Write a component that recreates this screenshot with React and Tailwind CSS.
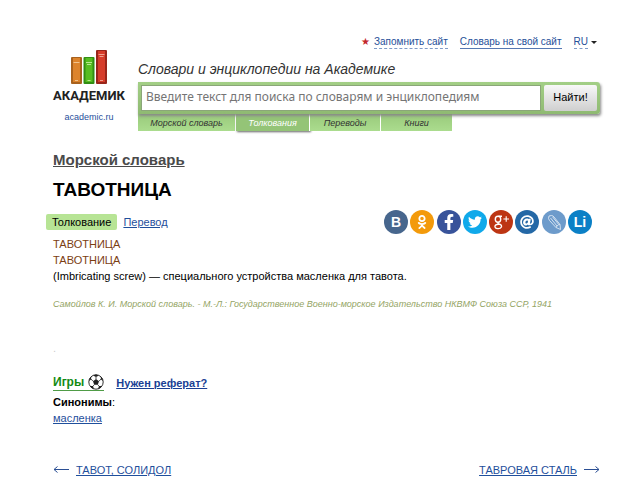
import React, { useState } from 'react';
import { FaOdnoklassniki, FaFacebookF, FaTwitter, FaAt } from 'react-icons/fa';

const TABS = [
  { value: 'marine', label: 'Морской словарь', width: 'w-[98px]' },
  { value: 'meanings', label: 'Толкования', width: 'w-[74px]' },
  { value: 'translations', label: 'Переводы', width: 'w-[71px]' },
  { value: 'books', label: 'Книги', width: 'w-[72px]' },
];

const PencilIcon = () => (
  <svg viewBox="0 0 24 24" className="size-6" fill="none" stroke="#dce8f4" strokeWidth=".9" strokeLinejoin="round">
    <path d="M6.5 8.5 Q6 5 9.5 5.5 Q11 5.5 12 7 L18 14.5 L18.5 19.5 L14 17.5 L7.5 10.5 Z" />
    <path d="M8.5 8 L15 16 M10.5 6.8 L16.8 14.6 M14 17.5 L15 16 L16.8 14.6 L18 14.5" />
  </svg>
);

const GooglePlusIcon = () => (
  <svg viewBox="0 0 24 24" className="size-6" fill="none" stroke="#fff" strokeWidth="1.4">
    <ellipse cx="9" cy="9.2" rx="2.7" ry="3" />
    <path d="M13 6.2 H9.5 M9.5 12.2 Q8 13.5 10.5 14.2 Q13 15 12.4 17 Q11.5 18.8 8.7 18.6 Q5.5 18.2 6 16 Q6.8 14 10.5 14.2" />
    <path strokeWidth="1.1" d="M17.2 6.2 V11.8 M14.4 9 H20" />
  </svg>
);

const SHARES = [
  { name: 'ВКонтакте', color: 'bg-[#47668d]', icon: <span className="text-sm font-bold">B</span> },
  { name: 'Одноклассники', color: 'bg-[#f39a0b]', icon: <FaOdnoklassniki className="size-[14px]" /> },
  { name: 'Facebook', color: 'bg-[#38539a]', icon: <FaFacebookF className="size-4" /> },
  { name: 'Twitter', color: 'bg-[#10a9ea]', icon: <FaTwitter className="size-[14px]" /> },
  { name: 'Google+', color: 'bg-[#bd3513]', icon: <GooglePlusIcon /> },
  { name: 'Mail.ru', color: 'bg-[#2468a6]', icon: <FaAt className="size-[14px]" /> },
  { name: 'LiveJournal', color: 'bg-[#6d9bcb]', icon: <PencilIcon /> },
  { name: 'LiveInternet', color: 'bg-[#0b80c6]', icon: <span className="text-sm font-bold">Li</span> },
];

const Books = () => (
  <svg viewBox="0 0 38 36" className="h-9 w-[38px]">
    <rect x="1" y="8" width="11" height="27" rx="1" fill="#a9621d" />
    <rect x="3" y="9" width="7" height="24" fill="#dd842c" />
    <path d="M3.5 13.5h6M5 31.5h3" stroke="#f3c38a" />
    <rect x="13.5" y="8" width="11" height="27" rx="1" fill="#318e12" />
    <rect x="15.5" y="9" width="7" height="24" fill="#57bd22" />
    <path d="M16 13.5h6M17 15.5h4M17.5 31.5h3" stroke="#b7e890" />
    <rect x="26" y="1" width="11" height="34" rx="1" fill="#98251a" />
    <rect x="28" y="2" width="7" height="31" fill="#d63c2a" />
    <path d="M28.5 5.5h6M29.5 7.5h4M30 31.5h3" stroke="#f0a08e" />
  </svg>
);

const BallIcon = () => (
  <svg viewBox="0 0 16 16" className="inline-block size-4">
    <circle cx="8" cy="8" r="7.2" fill="#fff" stroke="#333" />
    <path d="M8 5 L11 7.2 L9.8 10.7 H6.2 L5 7.2 Z" fill="#222" />
    <path d="M5 1.5 L8 3 L11 1.5 L8 .5Z M1 7 L3 5.5 L3.4 2.7 L1.5 4.5Z M15 7 L13 5.5 L12.6 2.7 L14.5 4.5Z M2 12 L5 12 L6 15 L3.5 14Z M14 12 L11 12 L10 15 L12.5 14Z" fill="#222" />
    <path d="M8 5V3M11 7.2L13 5M9.8 10.7L11 12.2M6.2 10.7L5 12.2M5 7.2L3 5" stroke="#222" strokeWidth=".8" />
  </svg>
);

const Arrow = ({ right }) => (
  <svg viewBox="0 0 16 10" className="h-[10px] w-4" fill="none" stroke="#2b4f94">
    <path d={right ? 'M0 4.5H15M11.5 1.5L15 4.5L11.5 7.5' : 'M16 4.5H1M4.5 1.5L1 4.5L4.5 7.5'} />
  </svg>
);

const Header = () => {
  const [query, setQuery] = useState('');
  const [tab, setTab] = useState('meanings');

  return (
    <header className="flex pl-[52px]">
      <a href="#home" className="mt-[13px] flex w-[74px] flex-col items-center text-[#1f4f9c]">
        <Books />
        <span className="mt-[2px] font-[Roboto,sans-serif] text-[13px] leading-[18px] font-bold text-[#222]">АКАДЕМИК</span>
        <span className="mt-[6px] text-[9px] leading-3">academic.ru</span>
      </a>
      <div className="ml-3 min-w-0 flex-1">
        <nav className="flex justify-end gap-3 pr-[3px] text-[10px] leading-3 text-[#264f99]">
          <span className="flex gap-1">
            <span className="text-[#c3272b]">★</span>
            <a href="#remember" className="border-b border-dashed border-[#7f9bc8]">Запомнить сайт</a>
          </span>
          <a href="#embed" className="border-b border-[#5577b2]">Словарь на свой сайт</a>
          <button type="button" className="flex items-center gap-[3px]">
            <span className="border-b border-dashed border-[#7f9bc8]">RU</span>
            <span className="border-x-[3px] border-t-[3px] border-x-transparent border-t-[#222]" />
          </button>
        </nav>
        <h2 className="mt-[10px] text-sm leading-5 text-[#333] italic">Словари и энциклопедии на Академике</h2>
        <form
          onSubmit={(e) => e.preventDefault()}
          className="relative mt-[3px] flex h-8 gap-[3px] rounded-r-[3px] bg-linear-to-b from-[#a3cf86] to-[#8fba72] p-[3px] shadow-[1px_2px_3px_#888]"
        >
          <input
            type="text"
            aria-label="Поиск"
            value={query}
            onChange={(e) => setQuery(e.target.value)}
            placeholder="Введите текст для поиска по словарям и энциклопедиям"
            className="min-w-0 flex-1 border border-[#8ba679] bg-white px-1 pb-[2px] font-['Noto_Sans',sans-serif] text-[12px] placeholder:text-[#757575]"
          />
          <button type="submit" className="w-[53px] rounded-[2px] bg-linear-to-b from-[#f8f8f8] to-[#cfcfcf] pb-[2px] text-[11px] text-black">
            Найти!
          </button>
        </form>
        <div className="flex">
          {TABS.map((t) => (
            <button
              key={t.value}
              type="button"
              onClick={() => setTab(t.value)}
              className={`${t.width} h-[17px] border-r border-white text-[9px] italic ${
                tab === t.value
                  ? 'bg-[#94c477] text-white shadow-[1px_1px_2px_#666]'
                  : 'bg-linear-to-b from-[#99ca7b] to-[#abdc8e] text-[#333]'
              }`}
            >
              {t.label}
            </button>
          ))}
        </div>
      </div>
    </header>
  );
};

export default function App() {
  return (
    <div className="bg-white pt-9 pr-10 pb-3 font-['Liberation_Sans',Arial,sans-serif] text-[11px] leading-4 text-black">
      <Header />
      <main className="pl-[53px]">
        <h3 className="mt-[19px] text-[15px] leading-5 font-bold">
          <a href="#marine" className="text-[#4a4a4a] underline">Морской словарь</a>
        </h3>
        <h1 className="mt-2 text-[19px] leading-6 font-bold">ТАВОТНИЦА</h1>
        <div className="mt-2 flex items-center justify-between pr-2">
          <div className="-ml-[7px] flex gap-[6px]">
            <span className="rounded-[2px] bg-[#b7e495] px-[6px]">Толкование</span>
            <a href="#translation" className="text-[#1f4f9c] underline">Перевод</a>
          </div>
          <div className="flex w-52 justify-between">
            {SHARES.map((s) => (
              <a
                key={s.name}
                href="#share"
                aria-label={s.name}
                className={`${s.color} flex size-6 items-center justify-center rounded-full text-white`}
              >
                {s.icon}
              </a>
            ))}
          </div>
        </div>
        <div className="mt-[2px] text-[#7c3e12]">
          <p>ТАВОТНИЦА</p>
          <p>ТАВОТНИЦА</p>
        </div>
        <p>(Imbricating screw) — специального устройства масленка для тавота.</p>
        <p className="mt-3 text-[9px] text-[#94a464] italic">
          Самойлов К. И. Морской словарь. - М.-Л.: Государственное Военно-морское Издательство НКВМФ Союза ССР, 1941
        </p>
        <p className="mt-7 text-[#ccc]">.</p>
        <div className="mt-[18px] flex items-center gap-3 font-bold">
          <a href="#games" className="flex items-center gap-1 border-b border-[#4f9c46] text-xs leading-4 text-[#128a12]">
            Игры <BallIcon />
          </a>
          <a href="#essay" className="text-[#1a3f94] underline">Нужен реферат?</a>
        </div>
        <p className="mt-[3px]"><b>Синонимы</b>:</p>
        <p><a href="#oiler" className="text-[#1f4f9c] underline">масленка</a></p>
        <nav className="mt-9 flex justify-between text-[#1f4f9c]">
          <a href="#prev" className="flex items-center gap-[7px]">
            <Arrow />
            <span className="underline">ТАВОТ, СОЛИДОЛ</span>
          </a>
          <a href="#next" className="flex items-center gap-[7px]">
            <span className="underline">ТАВРОВАЯ СТАЛЬ</span>
            <Arrow right />
          </a>
        </nav>
      </main>
    </div>
  );
}
